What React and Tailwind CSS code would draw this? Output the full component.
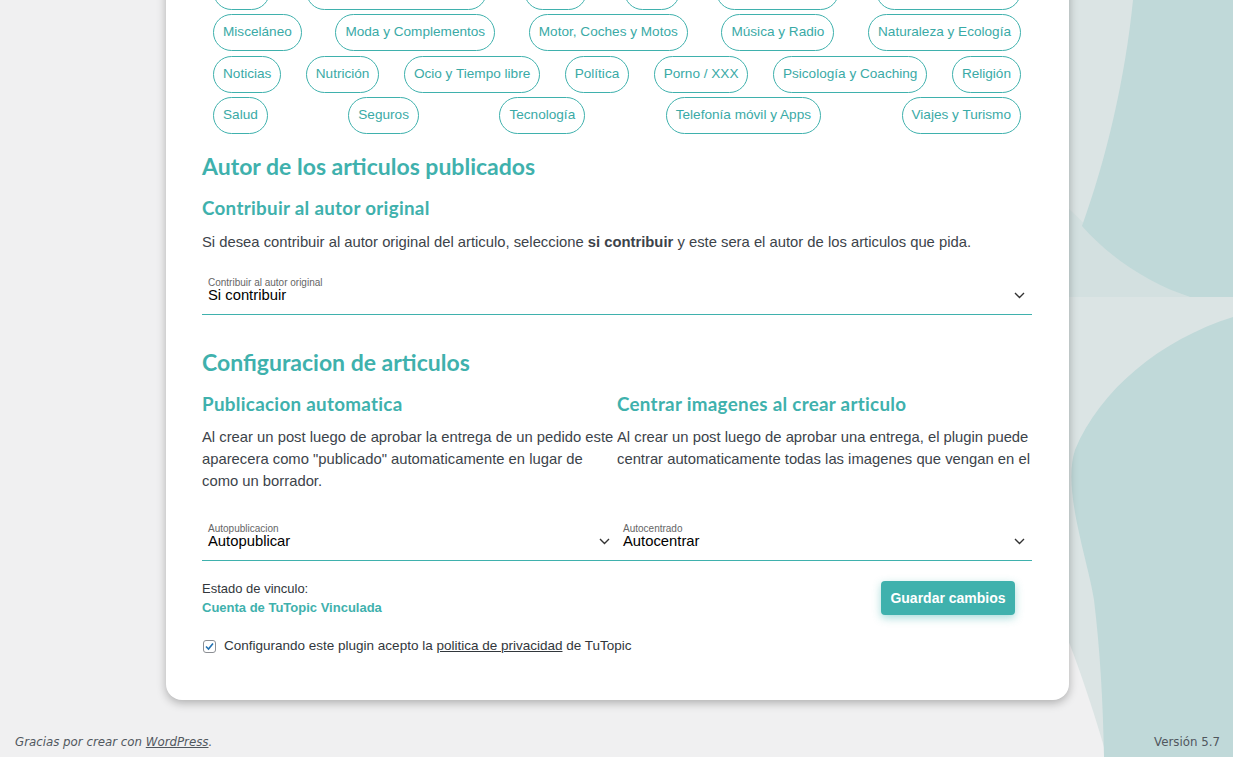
import React from 'react';

const tagRows = [
  ['Hogar', 'Informática y Construcción', 'Juegos', 'Leyes', 'Marketing y SEO', 'Medicina y Farmacia'],
  ['Misceláneo', 'Moda y Complementos', 'Motor, Coches y Motos', 'Música y Radio', 'Naturaleza y Ecología'],
  ['Noticias', 'Nutrición', 'Ocio y Tiempo libre', 'Política', 'Porno / XXX', 'Psicología y Coaching', 'Religión'],
  ['Salud', 'Seguros', 'Tecnología', 'Telefonía móvil y Apps', 'Viajes y Turismo'],
];

function Chevron() {
  return (
    <svg width="11" height="7" viewBox="0 0 11 7" className="shrink-0">
      <polyline points="1,1 5.5,5.5 10,1" fill="none" stroke="#333" strokeWidth="1.4" />
    </svg>
  );
}

function Select({ label, value }) {
  return (
    <div className="border-b border-[#3fb1ad] pb-[11px] pl-[6px] pr-[7px]">
      <div className="text-[10px] leading-[12px] text-[#666]">{label}</div>
      <div className="-mt-[2px] flex items-center justify-between text-[14.8px] leading-[16px] text-black">
        <span>{value}</span>
        <Chevron />
      </div>
    </div>
  );
}

export default function App() {
  const h1 = "font-['Lato',sans-serif] font-bold text-[#3fb1ad] text-[23px] leading-[28px]";
  const h2 = "font-['Lato',sans-serif] font-bold text-[#3fb1ad] text-[18.8px] leading-[24px] tracking-[0.3px]";
  const para = 'text-[14.8px] leading-[22px] text-[#3c434a]';
  return (
    <div className="relative h-[757px] overflow-hidden bg-[#f0f0f1] font-['Liberation_Sans',Arial,sans-serif]">
      {/* decorative background shapes */}
      <svg className="absolute left-0 top-0" width="1233" height="757" viewBox="0 0 1233 757">
        <path d="M1060,0 L1233,0 L1233,757 L1107,757 C1092,705 1078,665 1068,640 L1060,640 Z" fill="#dbe4e4" />
        <path d="M1060,200 C1100,240 1150,285 1190,297 L1060,297 Z" fill="#d3e0e0" />
        <path d="M1133,0 C1125,80 1106,160 1082,226 C1110,258 1150,284 1190,297 L1233,297 L1233,0 Z" fill="#c0d9d9" />
        <path d="M1233,317 C1160,340 1100,390 1075,450 C1062,490 1088,560 1094,600 C1100,650 1103,700 1104,757 L1233,757 Z" fill="#c0d9d9" />
      </svg>

      <div className="relative z-10 ml-[166px] -mt-[27.5px] w-[903px] rounded-b-2xl bg-white pb-[44px] pl-[36px] pr-[37px] shadow-[0_3px_10px_rgba(0,0,0,0.28)]">
        <div className="flex flex-col gap-[4.5px] px-[11px]">
          {tagRows.map((row, i) => (
            <div key={i} className="flex justify-between">
              {row.map((t) => (
                <span
                  key={t}
                  className="flex h-[37px] items-center rounded-full border border-[#3fb1ad] px-[9px] text-[13.6px] text-[#3aaaa6]"
                >
                  {t}
                </span>
              ))}
            </div>
          ))}
        </div>

        <h2 className={`${h1} mt-[17.5px]`}>Autor de los articulos publicados</h2>
        <h3 className={`${h2} mt-[16.5px]`}>Contribuir al autor original</h3>
        <p className={`${para} mt-[11px]`}>
          Si desea contribuir al autor original del articulo, seleccione <b>si contribuir</b> y este sera el autor de los articulos que pida.
        </p>
        <div className="mt-[24px]">
          <Select label="Contribuir al autor original" value="Si contribuir" />
        </div>

        <h2 className={`${h1} mt-[33px]`}>Configuracion de articulos</h2>
        <div className="grid grid-cols-2">
          <div>
            <h3 className={`${h2} mt-[16px]`}>Publicacion automatica</h3>
            <p className={`${para} mt-[10px]`}>
              Al crear un post luego de aprobar la entrega de un pedido este aparecera como "publicado" automaticamente en lugar de como un borrador.
            </p>
          </div>
          <div>
            <h3 className={`${h2} mt-[16px]`}>Centrar imagenes al crear articulo</h3>
            <p className={`${para} mt-[10px] h-[44px] overflow-hidden`}>
              Al crear un post luego de aprobar una entrega, el plugin puede centrar automaticamente todas las imagenes que vengan en el articulo.
            </p>
          </div>
          <div className="mt-[31px]">
            <Select label="Autopublicacion" value="Autopublicar" />
          </div>
          <div className="mt-[31px]">
            <Select label="Autocentrado" value="Autocentrar" />
          </div>
        </div>

        <div className="mt-[18px] flex items-start justify-between">
          <div className="text-[13px] leading-[19px]">
            <div className="text-[#32373c]">Estado de vinculo:</div>
            <div className="font-bold text-[#3fb1ad]">Cuenta de TuTopic Vinculada</div>
          </div>
          <button className="mr-[17px] mt-[2px] flex h-[34px] w-[134px] items-center justify-center rounded-[4px] bg-[#3fb1ad] text-[14px] font-bold text-white shadow-[0_3px_8px_rgba(63,177,173,0.45)]">
            Guardar cambios
          </button>
        </div>

        <label className="mt-[19px] flex items-center text-[13.5px] leading-[20px] text-[#32373c]">
          <span className="ml-px mr-[8px] flex h-[13px] w-[13px] items-center justify-center rounded-[3px] border border-[#8c8f94] bg-white">
            <svg width="11" height="11" viewBox="0 0 11 11">
              <polyline points="2,5.5 4.5,8 9,2.5" fill="none" stroke="#2271b1" strokeWidth="1.6" />
            </svg>
          </span>
          <span>
            Configurando este plugin acepto la <span className="underline">politica de privacidad</span> de TuTopic
          </span>
        </label>
      </div>

      <div className="relative z-10 mt-[34px] flex justify-between pl-[15px] pr-[13px] font-['DejaVu_Sans',Verdana,sans-serif] text-[11.8px] leading-[16px] text-[#50575e]">
        <span className="italic">
          Gracias por crear con <span className="underline">WordPress</span>.
        </span>
        <span>Versión 5.7</span>
      </div>
    </div>
  );
}
